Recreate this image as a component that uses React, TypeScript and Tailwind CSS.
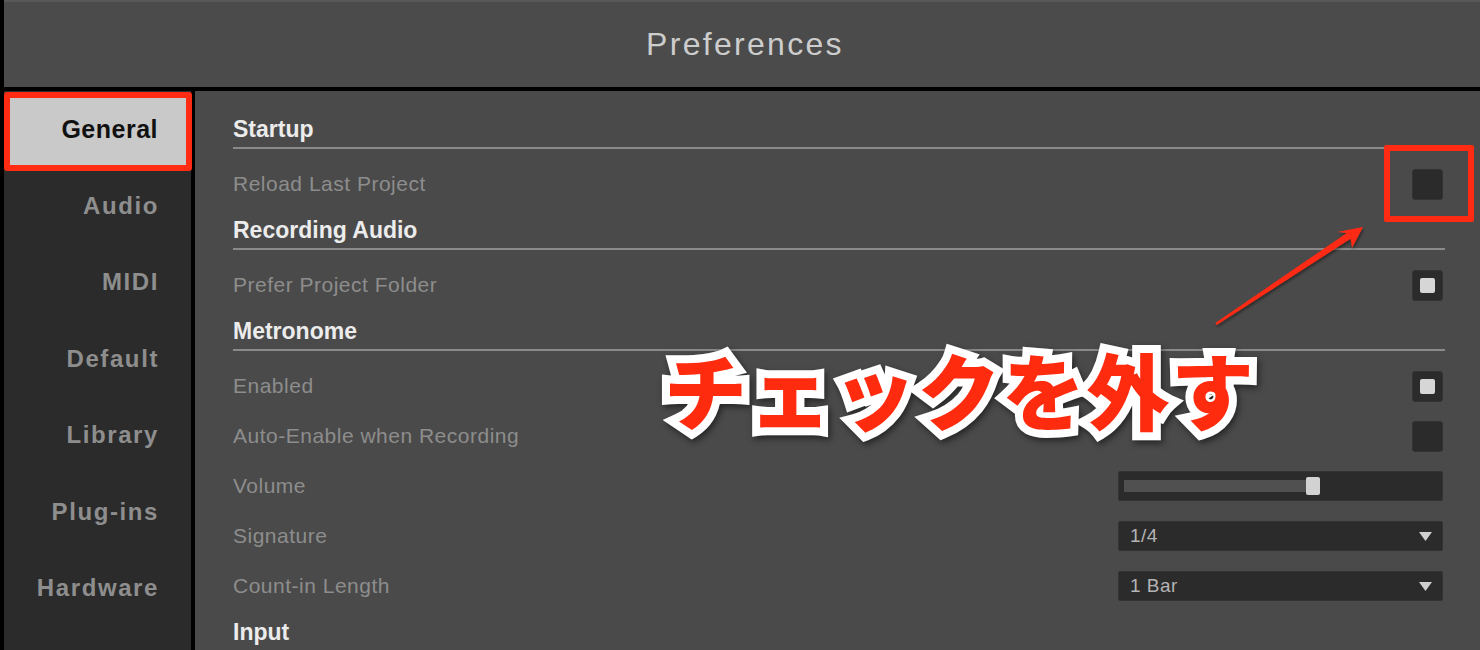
import React from "react";

const sideItems = ["General", "Audio", "MIDI", "Default", "Library", "Plug-ins", "Hardware"];

function Checkbox({ checked }: { checked?: boolean }) {
	return (
		<div className="w-[31px] h-[31px] mr-[2px] rounded-[3px] bg-[#2b2b2b] border border-[#333] flex items-center justify-center">
			{checked && <div className="w-[15px] h-[15px] rounded-[2px] bg-[#d6d6d6]" />}
		</div>
	);
}

function Dropdown({ value }: { value: string }) {
	return (
		<div className="w-[325px] h-[30px] mr-[2px] rounded-[2px] bg-[#2b2b2b] border border-[#333] flex items-center justify-between pl-[11px] pr-[10px]">
			<span className="text-[19px] text-[#b4b4b4] tracking-[0.5px]">{value}</span>
			<svg width="13" height="9" viewBox="0 0 13 9">
				<path d="M0 0 H13 L6.5 9 Z" fill="#cfcfcf" />
			</svg>
		</div>
	);
}

function Slider() {
	return (
		<div className="w-[325px] h-[30px] mr-[2px] rounded-[2px] bg-[#2b2b2b] border border-[#333] flex items-center pl-[5px]">
			<div className="w-[182px] h-[12px] bg-[#505050]" />
			<div className="w-[14px] h-[18px] rounded-[2px] bg-[#d2d2d2]" />
		</div>
	);
}

function Row({ label, children }: { label: string; children?: React.ReactNode }) {
	return (
		<div className="h-[50px] flex items-center justify-between">
			<span className="text-[21px] text-[#8d8d8d] tracking-[0.5px]">{label}</span>
			{children}
		</div>
	);
}

function Section({ title, children }: { title: string; children?: React.ReactNode }) {
	return (
		<div className="mb-[3px]">
			<div className="h-[38px] flex items-center border-b-2 border-[#8a8a8a]">
				<span className="text-[23px] font-bold text-[#ececec]">{title}</span>
			</div>
			<div className="pt-[10px]">{children}</div>
		</div>
	);
}

export default function App() {
	return (
		<div
			className="relative w-[1480px] h-[650px] overflow-hidden bg-black border-l-4 border-black flex flex-col"
			style={{ fontFamily: '"Liberation Sans", Arial, sans-serif' }}
		>
			{/* Title bar */}
			<div className="h-[91px] shrink-0 bg-[#4b4b4b] border-t-2 border-[#595959] border-b-4 border-b-black flex items-center justify-center">
				<span className="text-[32px] text-[#cdcdcd] tracking-[2.3px] pb-[2px] pl-[6px]">Preferences</span>
			</div>

			<div className="flex flex-1 min-h-0">
				{/* Category list */}
				<div className="w-[191px] shrink-0 bg-[#2b2b2b] border-r-4 border-black flex flex-col">
					{sideItems.map((item, i) =>
						i === 0 ? (
							<div key={item} className="h-[76.5px] relative z-10">
								<div className="w-[188px] h-[79px] mt-px rounded-[3px] border-[6px] border-[#ff2b12] bg-[#c9c9c9] flex items-center justify-end pr-[28px]">
									<span className="text-[25px] font-bold text-[#111] tracking-[0.5px] pb-[3px]">{item}</span>
								</div>
							</div>
						) : (
							<div key={item} className="h-[76.5px] flex items-center justify-end pr-[32px]">
								<span className="text-[24px] font-bold text-[#8e8e8e] tracking-[1.6px]">{item}</span>
							</div>
						)
					)}
				</div>

				{/* Settings */}
				<div className="flex-1 bg-[#4a4a4a] pl-[38px] pr-[35px] pt-[20px]">
					<Section title="Startup">
						<Row label="Reload Last Project">
							<Checkbox />
						</Row>
					</Section>
					<Section title="Recording Audio">
						<Row label="Prefer Project Folder">
							<Checkbox checked />
						</Row>
					</Section>
					<Section title="Metronome">
						<Row label="Enabled">
							<Checkbox checked />
						</Row>
						<Row label="Auto-Enable when Recording">
							<Checkbox />
						</Row>
						<Row label="Volume">
							<Slider />
						</Row>
						<Row label="Signature">
							<Dropdown value="1/4" />
						</Row>
						<Row label="Count-in Length">
							<Dropdown value="1 Bar" />
						</Row>
					</Section>
					<Section title="Input" />
				</div>
			</div>

			{/* Callout: box, arrow and caption */}
			<div className="absolute left-[1380px] top-[145px] w-[90px] h-[77px] border-[6px] border-[#ff2b12] rounded-[2px]" />
			<svg className="absolute -left-1 top-0 pointer-events-none" width="1480" height="650">
				<defs>
					<filter id="arrowShadow" x="-10%" y="-10%" width="130%" height="130%">
						<feDropShadow dx="1" dy="2" stdDeviation="1.5" floodColor="#000" floodOpacity="0.45" />
					</filter>
				</defs>
				<polygon
					points="1216.7,325 1350.6,238.8 1352,248 1363,227 1337,232 1346.8,233 1215.3,323"
					fill="#ff2b12"
					filter="url(#arrowShadow)"
				/>
			</svg>
			<span
				className="absolute left-[660px] top-[347px] text-[83px] tracking-[1.5px] leading-none font-black text-[#ff2b0f] [paint-order:stroke_fill] [-webkit-text-stroke:16px_#ffffff] [filter:drop-shadow(2px_3px_3px_rgba(0,0,0,0.5))]"
				style={{ fontFamily: '"Noto Sans CJK JP", sans-serif' }}
			>
				チェックを外す
			</span>
		</div>
	);
}
